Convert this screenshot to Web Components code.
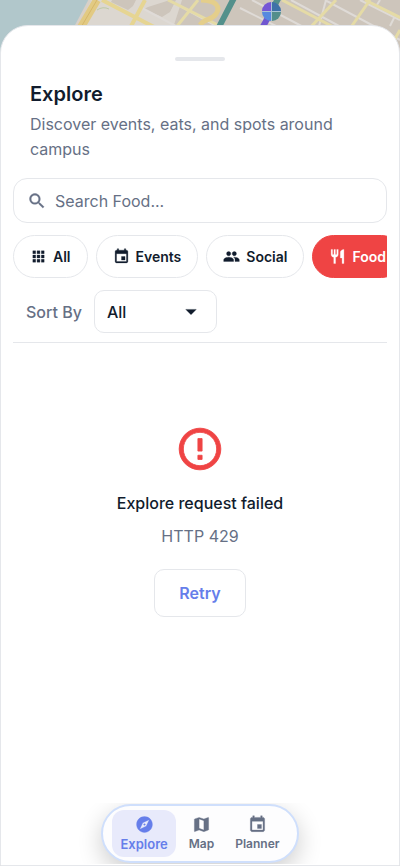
<!DOCTYPE html>
<html lang="en">
<head>
<meta charset="utf-8">
<meta name="viewport" content="width=device-width, initial-scale=1">
<title>Explore</title>
<style>
  html, body { margin: 0; height: 100%; }
  body { font-family: Inter, "Liberation Sans", sans-serif; color: #111c2d; background: #cdc5bb; overflow: hidden; }
</style>
</head>
<body>
<explore-page></explore-page>
<script>
const ICONS = {
  search: 'M15.5 14h-.79l-.28-.27C15.41 12.59 16 11.11 16 9.5 16 5.91 13.09 3 9.5 3S3 5.91 3 9.5 5.91 16 9.5 16c1.61 0 3.09-.59 4.23-1.57l.27.28v.79l5 4.99L20.49 19l-4.99-5zm-6 0C7.01 14 5 11.99 5 9.5S7.01 5 9.5 5 14 7.01 14 9.5 11.99 14 9.5 14z',
  apps: 'M4 8h4V4H4v4zm6 12h4v-4h-4v4zm-6 0h4v-4H4v4zm0-6h4v-4H4v4zm6 0h4v-4h-4v4zm6-10v4h4V4h-4zm-6 4h4V4h-4v4zm6 6h4v-4h-4v4zm0 6h4v-4h-4v4z',
  event: 'M17 12h-5v5h5v-5zM16 1v2H8V1H6v2H5c-1.11 0-1.99.9-1.99 2L3 19c0 1.1.89 2 2 2h14c1.1 0 2-.9 2-2V5c0-1.1-.9-2-2-2h-1V1h-2zm3 18H5V8h14v11z',
  people: 'M16 11c1.66 0 2.99-1.34 2.99-3S17.66 5 16 5c-1.66 0-3 1.34-3 3s1.34 3 3 3zm-8 0c1.66 0 2.99-1.34 2.99-3S9.66 5 8 5C6.34 5 5 6.34 5 8s1.34 3 3 3zm0 2c-2.33 0-7 1.17-7 3.5V19h14v-2.5c0-2.33-4.67-3.5-7-3.5zm8 0c-.29 0-.62.02-.97.05 1.16.84 1.97 1.97 1.97 3.45V19h6v-2.5c0-2.33-4.67-3.5-7-3.5z',
  food: 'M11 9H9V2H7v7H5V2H3v7c0 2.12 1.66 3.84 3.75 3.97V22h2.5v-9.03C11.34 12.84 13 11.12 13 9V2h-2v7zm5-3v8h2.5v8H21V2c-2.76 0-5 2.24-5 4z',
  error: 'M11 15h2v2h-2zm0-8h2v6h-2zm.99-5C6.47 2 2 6.48 2 12s4.47 10 9.99 10C17.52 22 22 17.52 22 12S17.52 2 11.99 2zM12 20c-4.42 0-8-3.58-8-8s3.58-8 8-8 8 3.58 8 8-3.58 8-8 8z',
  explore: 'M12 10.9c-.61 0-1.1.49-1.1 1.1s.49 1.1 1.1 1.1c.61 0 1.1-.49 1.1-1.1s-.49-1.1-1.1-1.1zM12 2C6.48 2 2 6.48 2 12s4.48 10 10 10 10-4.48 10-10S17.52 2 12 2zm2.19 12.19L6 18l3.81-8.19L18 6l-3.81 8.19z',
  map: 'M20.5 3l-.16.03L15 5.1 9 3 3.36 4.9c-.21.07-.36.25-.36.48V20.5c0 .28.22.5.5.5l.16-.03L9 18.9l6 2.1 5.64-1.9c.21-.07.36-.25.36-.48V3.5c0-.28-.22-.5-.5-.5zM15 19l-6-2.11V5l6 2.11V19z',
  caret: 'M5 8.500h14l-7 7z'
};

function define(name, markup, setup) {
  const template = document.createElement('template');
  template.innerHTML = markup;
  customElements.define(name, class extends HTMLElement {
    connectedCallback() {
      if (this.shadowRoot) return;
      this.attachShadow({ mode: 'open' }).append(template.content.cloneNode(true));
      if (setup) setup(this, this.shadowRoot);
    }
  });
}

define('app-icon', `
  <style>
    :host { display: inline-flex; flex: none; width: var(--icon-size, 18px); height: var(--icon-size, 18px); }
    svg { width: 100%; height: 100%; fill: currentColor; stroke: currentColor; stroke-width: .4; overflow: visible; }
  </style>
  <svg viewBox="0 0 24 24" aria-hidden="true"><path></path></svg>`,
  (host, root) => root.querySelector('path').setAttribute('d', ICONS[host.getAttribute('name')]));

define('campus-map', `
  <style>
    :host { display: block; overflow: hidden; }
    svg { display: block; width: 100%; height: 60px; }
  </style>
  <svg viewBox="0 0 400 60" preserveAspectRatio="xMidYMin slice" role="img" aria-label="Map">
    <rect width="400" height="60" fill="#cdc5bb"/>
    <path d="M90 0H215L190 60H60Z" fill="#dcd7d0"/>
    <path d="M112 0h24l-3 6-5 4-17-8zM148 7l22-7h6l-6 12-8 5-18-8zM182 0h43l-8 25h-43z" fill="#cdc5bb"/>
    <path d="M97 10q6-4 12-1" fill="none" stroke="#bccaa6" stroke-width="1"/>
    <g fill="none" stroke="#dfdbd7" stroke-width="2">
      <path d="M142 8l45 24M180 6l40 22M240 8l56 28M252 0l80 42M291 0l100 54M325 0l75 40M360 0l40 20M380 0l-5 8M326 0l-8 30M394 18l-4 8"/>
    </g>
    <g fill="none" stroke="#e5dba6" stroke-width="3">
      <path d="M168 0l60 30M198 0l-24 30M282 0l76 40M336 0l-28 30M370 0l-21 30M365 0l40 20M400 30l-8 14"/>
    </g>
    <g fill="none" stroke="#e6d592" stroke-width="4"><path d="M102 0l54 28M145 0l-16 30"/></g>
    <path d="M0 0H90L76 30V60H0Z" fill="#b1c7cb"/>
    <path d="M90 0L72 34" stroke="#d8d0c8" stroke-width="3"/>
    <path d="M97 0L77 34" stroke="#e2ca83" stroke-width="8"/>
    <path d="M97 0L77 34" stroke="#d6b769" stroke-width="1"/>
    <path d="M201 0c15 0 20 7 15 14s-10 3-16 11" fill="none" stroke="#e4ce8b" stroke-width="5"/>
    <path d="M235 -4L218 29M279 -3L272 10" stroke="#53908b" stroke-width="6"/>
    <path d="M271 12L260 32" stroke="#7056d0" stroke-width="6"/>
    <path d="M271 11V2a9 9 0 0 0-9 9z" fill="#7656d6"/>
    <path d="M272 11V2a9 9 0 0 1 9 9z" fill="#3e72a8"/>
    <path d="M271 12v9a9 9 0 0 1-9-9z" fill="#5689df"/>
    <path d="M272 12v9a9 9 0 0 0 9-9z" fill="#538e8b"/>
    <path d="M262 11.500h19M271.500 2v19" stroke="#a9c3d5" stroke-width="1"/>
  </svg>`);

define('search-field', `
  <style>
    :host { display: block; }
    label { display: flex; align-items: center; gap: 8px; height: 43px; padding: 0 13px; border: 1px solid #e5e7eb; border-radius: 14px; color: #667085; --icon-size: 20px; }
    input { flex: 1; min-width: 0; border: 0; outline: 0; padding: 0; background: none; font: inherit; font-size: 16px; color: #111c2d; }
    input::placeholder { color: #667085; opacity: 1; }
  </style>
  <label><app-icon name="search"></app-icon><input type="search" aria-label="Search Food" placeholder="Search Food..."></label>`);

define('filter-chip', `
  <style>
    :host { display: block; flex: none; }
    button { display: flex; align-items: center; gap: 6px; height: 43px; padding: 0 16px; border: 1px solid #e5e7eb; border-radius: 22px; background: #fff; color: #111c2d; font: inherit; font-size: 14px; font-weight: 600; --icon-size: 17px; }
    :host([active]) button { background: #ef4444; border-color: #ef4444; color: #fff; }
  </style>
  <button type="button"><app-icon></app-icon><slot></slot></button>`,
  (host, root) => {
    root.querySelector('button').setAttribute('aria-pressed', host.hasAttribute('active'));
    const icon = document.createElement('app-icon');
    icon.setAttribute('name', host.getAttribute('icon'));
    root.querySelector('app-icon').replaceWith(icon);
  });

define('sort-control', `
  <style>
    :host { display: flex; align-items: center; gap: 12px; padding: 0 13px; }
    label { font-size: 16px; font-weight: 500; color: #667085; }
    .box { display: grid; align-items: center; width: 123px; }
    select, app-icon { grid-area: 1 / 1; }
    select { appearance: none; width: 100%; height: 43px; padding: 0 12px; border: 1px solid #e5e7eb; border-radius: 10px; background: #fff; color: #111c2d; font: inherit; font-size: 16px; font-weight: 500; }
    app-icon { --icon-size: 18px; justify-self: end; margin-right: 17px; pointer-events: none; }
  </style>
  <label for="sort">Sort By</label>
  <div class="box"><select id="sort"><option>All</option></select><app-icon name="caret"></app-icon></div>`);

define('error-state', `
  <style>
    :host { display: flex; flex-direction: column; align-items: center; padding-top: 81px; text-align: center; }
    app-icon { --icon-size: 50px; color: #ef4444; }
    h2 { margin: 17px 0 0; font-size: 16px; line-height: 24px; font-weight: 500; }
    p { margin: 9px 0 0; font-size: 16px; line-height: 24px; color: #667085; }
    button { margin-top: 21px; height: 48px; padding: 0 24px; border: 1px solid #e5e7eb; border-radius: 10px; background: #fff; color: #667eea; font: inherit; font-size: 16px; font-weight: 600; }
  </style>
  <app-icon name="error"></app-icon>
  <h2><slot name="title"></slot></h2>
  <p><slot></slot></p>
  <button type="button">Retry</button>`);

define('nav-item', `
  <style>
    :host { display: block; }
    a { display: flex; flex-direction: column; align-items: center; gap: 2px; padding: 5px 8px; border-radius: 12px; color: #667085; font-size: 12px; line-height: 16px; font-weight: 600; text-decoration: none; --icon-size: 19px; }
    :host([active]) a { background: #e8eafb; color: #667eea; font-size: 13px; }
  </style>
  <a href="#"><app-icon></app-icon><slot></slot></a>`,
  (host, root) => {
    if (host.hasAttribute('active')) root.querySelector('a').setAttribute('aria-current', 'page');
    const icon = document.createElement('app-icon');
    icon.setAttribute('name', host.getAttribute('icon'));
    root.querySelector('app-icon').replaceWith(icon);
  });

define('tab-bar', `
  <style>
    :host { display: flex; justify-content: center; overflow: hidden; padding: 1px 0; }
    nav { display: flex; align-items: center; gap: 5px; padding: 4px 9px; border: 2px solid #cfdffc; border-radius: 30px; background: #fdfdfe; box-shadow: 0 8px 24px rgba(0, 0, 0, .2); }
  </style>
  <nav aria-label="Main"><slot></slot></nav>`);

define('explore-page', `
  <style>
    :host { display: grid; height: 100vh; grid-template: 25px minmax(0, 1fr) / minmax(0, 1fr); position: relative; }
    campus-map { position: absolute; inset: 0 0 auto; }
    main { grid-row: 2; position: relative; display: flex; flex-direction: column; box-sizing: border-box; padding: 0 12px; border: 1px solid #e5e7eb; border-radius: 28px 28px 0 0; background: #fff; }
    .handle { width: 50px; height: 4px; margin: 31px auto 0; border-radius: 2px; background: #e5e7eb; flex: none; }
    header { padding: 18px 17px 16px; }
    h1 { margin: 0; font-size: 20px; line-height: 30px; font-weight: 600; }
    header p { margin: 3px 0 0; font-size: 16px; line-height: 25px; color: #667085; }
    .chips { display: flex; gap: 8px; margin-top: 12px; overflow: hidden; flex: none; }
    sort-control { margin-top: 12px; padding-bottom: 9px; border-bottom: 1px solid #e5e7eb; }
    tab-bar { position: absolute; inset: auto 0 2px; }
  </style>
  <campus-map></campus-map>
  <main>
    <div class="handle"></div>
    <header><h1>Explore</h1><p>Discover events, eats, and spots around campus</p></header>
    <search-field></search-field>
    <div class="chips">
      <filter-chip icon="apps">All</filter-chip>
      <filter-chip icon="event">Events</filter-chip>
      <filter-chip icon="people">Social</filter-chip>
      <filter-chip icon="food" active>Food</filter-chip>
    </div>
    <sort-control></sort-control>
    <error-state><span slot="title">Explore request failed</span>HTTP 429</error-state>
  </main>
  <tab-bar>
    <nav-item icon="explore" active>Explore</nav-item>
    <nav-item icon="map">Map</nav-item>
    <nav-item icon="event">Planner</nav-item>
  </tab-bar>`);
</script>
</body>
</html>
